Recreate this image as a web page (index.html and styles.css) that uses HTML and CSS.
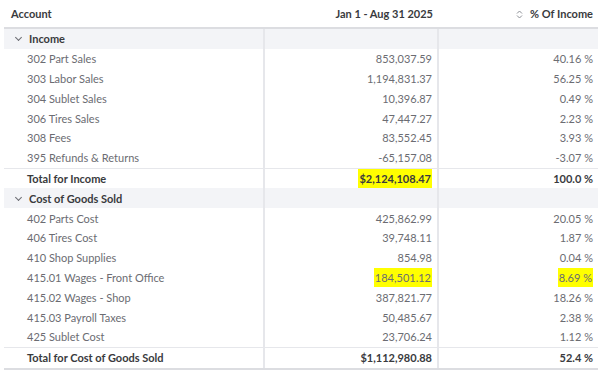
FILE: index.html
```html
<!DOCTYPE html>
<html lang="en">
<head>
    <meta charset="UTF-8">
    <title>Profit and Loss</title>
    <link rel="stylesheet" href="styles.css">
</head>
<body>
    <table class="report">
        <colgroup>
            <col class="col-account">
            <col class="col-amount">
            <col class="col-pct">
        </colgroup>
        <thead>
            <tr>
                <th class="left">Account</th>
                <th>Jan 1 - Aug 31 2025</th>
                <th>
                    <svg class="sort-icon" width="7" height="9" viewBox="0 0 7 9">
                        <path d="M1 3.5 L3.5 1 L6 3.5 M1 5.5 L3.5 8 L6 5.5" fill="none" stroke="#8d9096" stroke-width="1"/>
                    </svg>
                    % Of Income
                </th>
            </tr>
        </thead>
        <tbody>
            <tr class="group">
                <td><span class="chev"></span>Income</td><td></td><td></td>
            </tr>
            <tr><td>302 Part Sales</td><td>853,037.59</td><td>40.16 %</td></tr>
            <tr><td>303 Labor Sales</td><td>1,194,831.37</td><td>56.25 %</td></tr>
            <tr><td>304 Sublet Sales</td><td>10,396.87</td><td>0.49 %</td></tr>
            <tr><td>306 Tires Sales</td><td>47,447.27</td><td>2.23 %</td></tr>
            <tr><td>308 Fees</td><td>83,552.45</td><td>3.93 %</td></tr>
            <tr><td>395 Refunds &amp; Returns</td><td>-65,157.08</td><td>-3.07 %</td></tr>
            <tr class="total">
                <td>Total for Income</td><td><span class="mark">$2,124,108.47</span></td><td>100.0 %</td>
            </tr>
            <tr class="group">
                <td><span class="chev"></span>Cost of Goods Sold</td><td></td><td></td>
            </tr>
            <tr><td>402 Parts Cost</td><td>425,862.99</td><td>20.05 %</td></tr>
            <tr><td>406 Tires Cost</td><td>39,748.11</td><td>1.87 %</td></tr>
            <tr><td>410 Shop Supplies</td><td>854.98</td><td>0.04 %</td></tr>
            <tr><td>415.01 Wages - Front Office</td><td><span class="mark">184,501.12</span></td><td><span class="mark">8.69 %</span></td></tr>
            <tr><td>415.02 Wages - Shop</td><td>387,821.77</td><td>18.26 %</td></tr>
            <tr><td>415.03 Payroll Taxes</td><td>50,485.67</td><td>2.38 %</td></tr>
            <tr><td>425 Sublet Cost</td><td>23,706.24</td><td>1.12 %</td></tr>
            <tr class="total last">
                <td>Total for Cost of Goods Sold</td><td>$1,112,980.88</td><td>52.4 %</td>
            </tr>
        </tbody>
    </table>
</body>
</html>
```

FILE: styles.css
```css
body {
    margin: 0;
    padding: 0 2px 0 4px;
    background-color: #fff;
    font-family: 'Lato', 'Liberation Sans', sans-serif;
    font-size: 11px;
    color: #6b6c72;
}

.report {
    width: 594px;
    border-collapse: collapse;
    table-layout: fixed;
}

.col-account {
    width: 260px;
}

.col-amount {
    width: 174px;
}

.report th {
    height: 27px;
    padding: 0 5px 0 7px;
    text-align: right;
    font-weight: bold;
    color: #393a3d;
    border-bottom: 2px solid #dcdde1;
    white-space: nowrap;
}

.report th.left {
    text-align: left;
}

.sort-icon {
    margin-right: 4px;
    vertical-align: -1px;
}

.report td {
    height: 19.8px;
    padding: 0 5px 0 23px;
    text-align: right;
    white-space: nowrap;
    border-left: 2px solid #e6e7eb;
}

.report td:first-child {
    text-align: left;
    border-left: none;
}

.report td:nth-child(2) {
    padding-left: 5px;
}

.report td:nth-child(3) {
    padding-left: 5px;
}

.group td {
    background-color: #f3f4f7;
    color: #393a3d;
    font-weight: bold;
}

.group td:first-child {
    padding-left: 10px;
}

.chev {
    display: inline-block;
    width: 4px;
    height: 4px;
    border-right: 1px solid #6b6c72;
    border-bottom: 1px solid #6b6c72;
    transform: rotate(45deg);
    margin: 0 8px 3px 2px;
}

.total td {
    color: #393a3d;
    font-weight: bold;
    border-top: 1px solid #e6e7eb;
}

.total.last td {
    border-bottom: 2px solid #dcdde1;
}

.mark {
    background-color: #ffff00;
    padding: 3px 1px;
}
```
